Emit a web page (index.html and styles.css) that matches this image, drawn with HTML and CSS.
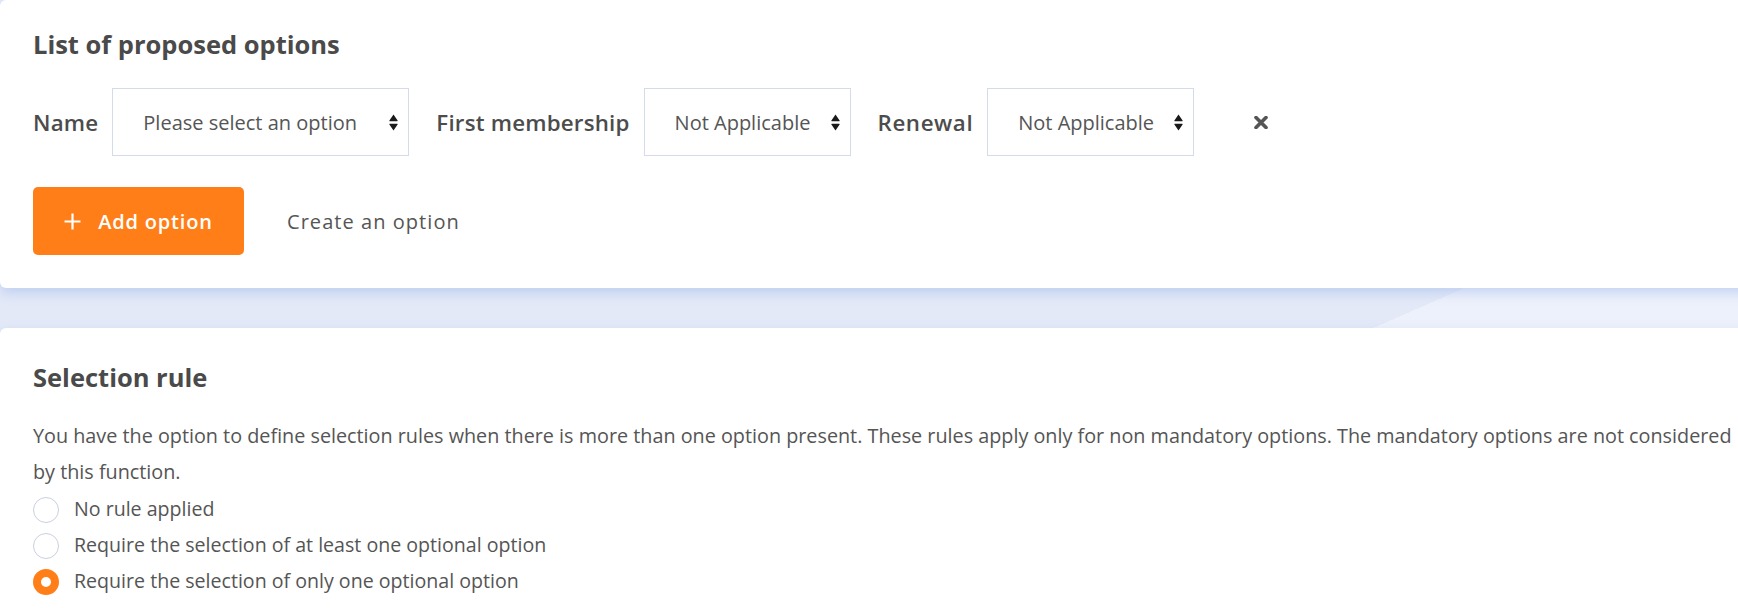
FILE: index.html
```html
<!DOCTYPE html>
<html lang="en">
<head>
<meta charset="utf-8">
<title>Options</title>
<link rel="stylesheet" href="styles.css">
</head>
<body>
<div class="page">
  <section class="card card-options">
    <h2 class="card-title">List of proposed options</h2>
    <div class="option-row">
      <label class="field-label">Name</label>
      <div class="select select-name">
        <span class="select-value">Please select an option</span>
        <svg class="select-arrow" width="9" height="17" viewBox="0 0 9 17"><path d="M4.5 0.5 L8.6 6.6 Q8.9 7.2 8.2 7.2 H0.8 Q0.1 7.2 0.4 6.6 Z M0.8 9.8 H8.2 Q8.9 9.8 8.6 10.4 L4.5 16.5 L0.4 10.4 Q0.1 9.8 0.8 9.8 Z" fill="#1a1a1a"/></svg>
      </div>
      <label class="field-label">First membership</label>
      <div class="select select-small">
        <span class="select-value">Not Applicable</span>
        <svg class="select-arrow" width="9" height="17" viewBox="0 0 9 17"><path d="M4.5 0.5 L8.6 6.6 Q8.9 7.2 8.2 7.2 H0.8 Q0.1 7.2 0.4 6.6 Z M0.8 9.8 H8.2 Q8.9 9.8 8.6 10.4 L4.5 16.5 L0.4 10.4 Q0.1 9.8 0.8 9.8 Z" fill="#1a1a1a"/></svg>
      </div>
      <label class="field-label field-label-wide">Renewal</label>
      <div class="select select-small">
        <span class="select-value">Not Applicable</span>
        <svg class="select-arrow" width="9" height="17" viewBox="0 0 9 17"><path d="M4.5 0.5 L8.6 6.6 Q8.9 7.2 8.2 7.2 H0.8 Q0.1 7.2 0.4 6.6 Z M0.8 9.8 H8.2 Q8.9 9.8 8.6 10.4 L4.5 16.5 L0.4 10.4 Q0.1 9.8 0.8 9.8 Z" fill="#1a1a1a"/></svg>
      </div>
      <button class="remove-btn" type="button" aria-label="Remove">
        <svg width="14" height="13" viewBox="0 0 14 13"><path d="M2 1.5 L12 11.5 M12 1.5 L2 11.5" stroke="#555" stroke-width="3.6" stroke-linecap="round"/></svg>
      </button>
    </div>
    <div class="actions">
      <button class="btn-primary" type="button">
        <svg width="17" height="17" viewBox="0 0 17 17"><path d="M8.5 0.5 V16.5 M0.5 8.5 H16.5" stroke="#fff" stroke-width="2.2"/></svg>
        <span>Add option</span>
      </button>
      <a class="link-create" href="#">Create an option</a>
    </div>
  </section>

  <section class="card card-rules">
    <h2 class="card-title">Selection rule</h2>
    <p class="rule-text">You have the option to define selection rules when there is more than one option present. These rules apply only for non mandatory options. The mandatory options are not considered by this function.</p>
    <ul class="radio-list">
      <li class="radio-item"><span class="radio"></span>No rule applied</li>
      <li class="radio-item"><span class="radio"></span>Require the selection of at least one optional option</li>
      <li class="radio-item"><span class="radio radio-checked"></span>Require the selection of only one optional option</li>
    </ul>
  </section>
</div>
</body>
</html>
```
FILE: styles.css
```css
html, body {
  margin: 0;
  padding: 0;
}

body {
  height: 100vh;
  overflow: hidden;
  font-family: "Open Sans", "Noto Sans", sans-serif;
  color: #555;
  background: linear-gradient(156.3deg, #e3e9f7 67.9%, #edf1fb 67.9%);
}

.page {
  display: flex;
  flex-direction: column;
  gap: 40px;
  margin-right: -20px;
}

.card {
  background: #fff;
  border-radius: 6px;
  box-shadow: 0 5px 12px rgba(150, 178, 235, 0.45);
  padding-left: 33px;
  padding-right: 13px;
}

.card-title {
  margin: 0;
  font-size: 25.5px;
  line-height: 32px;
  font-weight: 700;
  color: #4a4a4a;
}

.card-options {
  padding-top: 28px;
  padding-bottom: 33px;
}

.option-row {
  display: flex;
  align-items: center;
  margin-top: 28px;
  height: 68px;
}

.field-label {
  font-size: 22.3px;
  font-weight: 600;
  letter-spacing: 0.2px;
  color: #4c4c4c;
  margin-right: 14px;
}

.field-label-wide {
  letter-spacing: 0.6px;
}

.select {
  box-sizing: border-box;
  height: 68px;
  border: 1px solid #d4dce9;
  display: flex;
  align-items: center;
  justify-content: space-between;
  padding: 0 10px 0 30px;
  margin-right: 27px;
  font-size: 20px;
  color: #555;
}

.select-name { width: 297px; }
.select-small { width: 207px; }

.select-arrow {
  flex: none;
  margin-top: 1px;
}

.remove-btn {
  border: 0;
  background: none;
  padding: 0;
  margin-left: 33px;
  display: flex;
  align-items: center;
  cursor: pointer;
}

.actions {
  display: flex;
  align-items: center;
  margin-top: 31px;
}

.btn-primary {
  box-sizing: border-box;
  height: 68px;
  width: 211px;
  border: 0;
  border-radius: 5px;
  background: #ff7e17;
  color: #fff;
  font-family: inherit;
  font-size: 20px;
  font-weight: 600;
  letter-spacing: 0.8px;
  display: flex;
  align-items: center;
  justify-content: center;
  gap: 17px;
  padding: 0;
  cursor: pointer;
}

.link-create {
  margin-left: 43px;
  font-size: 20px;
  letter-spacing: 1.05px;
  color: #555;
  text-decoration: none;
}

.card-rules {
  padding-top: 33px;
  padding-bottom: 40px;
}

.rule-text {
  margin: 25px 0 0;
  font-size: 19.8px;
  line-height: 36px;
  color: #555;
}

.radio-list {
  list-style: none;
  margin: 0;
  padding: 0;
}

.radio-item {
  display: flex;
  align-items: center;
  height: 36px;
  font-size: 19.6px;
  color: #555;
}

.radio {
  box-sizing: border-box;
  width: 26px;
  height: 26px;
  border-radius: 50%;
  border: 1.5px solid #c9d1de;
  background: #fff;
  margin-right: 15px;
  margin-top: 3px;
  flex: none;
}

.radio-checked {
  border: 8px solid #ff7e17;
  background: #fff;
}
```
